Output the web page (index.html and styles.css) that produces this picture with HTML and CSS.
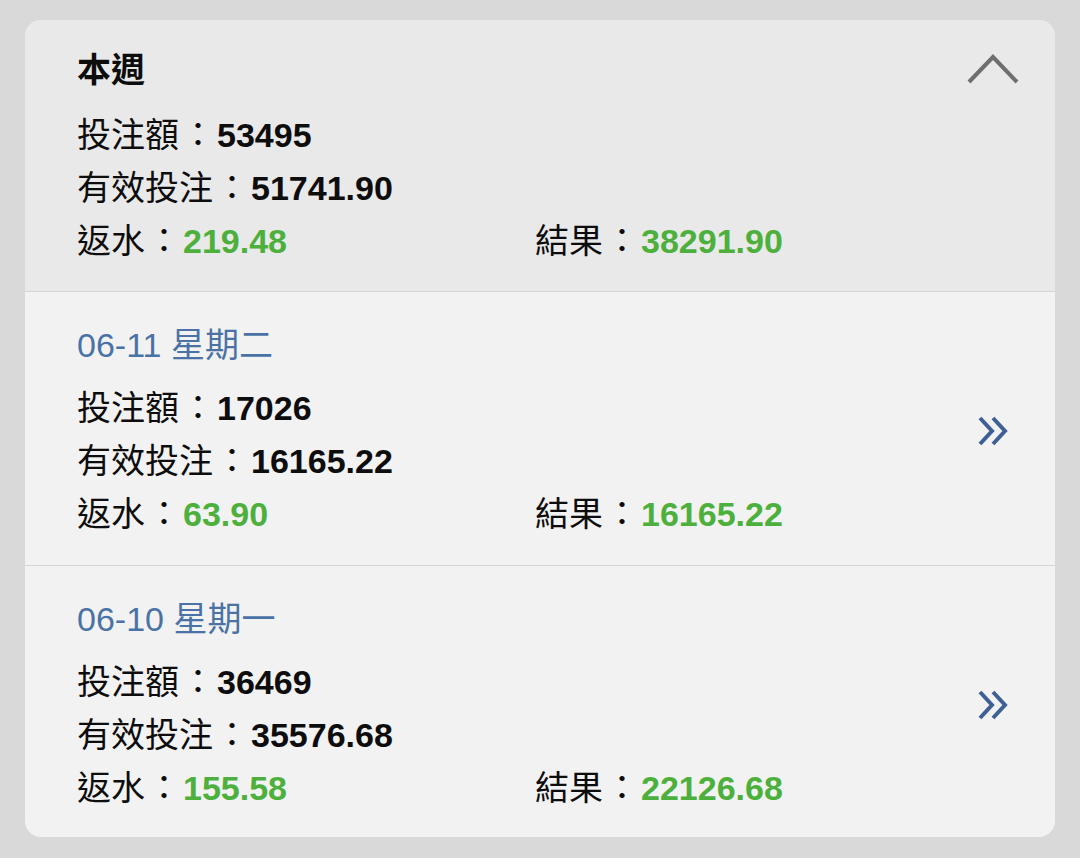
FILE: index.html
```html
<!DOCTYPE html>
<html>
<head>
    <title>投注記錄</title>
    <link rel="stylesheet" href="styles.css">
</head>
<body>
    <div class="card">
        <div class="section summary">
            <div class="info">
                <div class="title">本週</div>
                <div class="grid">
                    <div class="line wide">投注額<span class="colon">：</span><b>53495</b></div>
                    <div class="line wide">有效投注<span class="colon">：</span><b>51741.90</b></div>
                    <div class="line">返水<span class="colon">：</span><b class="green">219.48</b></div>
                    <div class="line">結果<span class="colon">：</span><b class="green">38291.90</b></div>
                </div>
            </div>
            <svg class="up" width="52" height="31" viewBox="0 0 52 31">
                <polyline points="2,28 26,3 50,28" fill="none" stroke="#6f6f6f" stroke-width="4"/>
            </svg>
        </div>
        <div class="section day">
            <div class="info">
                <div class="title date">06-11 星期二</div>
                <div class="grid">
                    <div class="line wide">投注額<span class="colon">：</span><b>17026</b></div>
                    <div class="line wide">有效投注<span class="colon">：</span><b>16165.22</b></div>
                    <div class="line">返水<span class="colon">：</span><b class="green">63.90</b></div>
                    <div class="line">結果<span class="colon">：</span><b class="green">16165.22</b></div>
                </div>
            </div>
            <svg class="more" width="32" height="30" viewBox="0 0 32 30">
                <polyline points="3,2 15,15 3,28" fill="none" stroke="#3e6096" stroke-width="4"/>
                <polyline points="16,2 28,15 16,28" fill="none" stroke="#3e6096" stroke-width="4"/>
            </svg>
        </div>
        <div class="section day last">
            <div class="info">
                <div class="title date">06-10 星期一</div>
                <div class="grid">
                    <div class="line wide">投注額<span class="colon">：</span><b>36469</b></div>
                    <div class="line wide">有效投注<span class="colon">：</span><b>35576.68</b></div>
                    <div class="line">返水<span class="colon">：</span><b class="green">155.58</b></div>
                    <div class="line">結果<span class="colon">：</span><b class="green">22126.68</b></div>
                </div>
            </div>
            <svg class="more" width="32" height="30" viewBox="0 0 32 30">
                <polyline points="3,2 15,15 3,28" fill="none" stroke="#3e6096" stroke-width="4"/>
                <polyline points="16,2 28,15 16,28" fill="none" stroke="#3e6096" stroke-width="4"/>
            </svg>
        </div>
    </div>
</body>
</html>
```

FILE: styles.css
```css
body {
    margin: 0;
    background-color: #d9d9d9;
    font-family: "Liberation Sans", "Noto Sans CJK TC", sans-serif;
    color: #0d0d0d;
}
.card {
    margin: 20px 25px;
    border-radius: 16px;
    overflow: hidden;
    background-color: #f2f2f2;
}
.section {
    display: flex;
    padding: 24px 46px 23px 52px;
    border-bottom: 1px solid #d4d4d4;
}
.section.day {
    padding-top: 27px;
    padding-bottom: 24px;
}
.section.last {
    border-bottom: none;
    padding-bottom: 22px;
}
.summary {
    background-color: #e9e9e9;
    padding-right: 36px;
}
.info {
    flex: 1;
}
.title {
    font-size: 34px;
    font-weight: bold;
    line-height: 53px;
    margin-bottom: 12px;
}
.title.date {
    font-weight: normal;
    color: #4a72a6;
    margin-bottom: 10px;
}
.grid {
    display: grid;
    grid-template-columns: 458px 1fr;
}
.line {
    font-size: 34px;
    line-height: 53px;
    white-space: nowrap;
}
.line.wide {
    grid-column: 1 / 3;
}
.colon {
    margin-left: 2px;
    margin-right: 2px;
}
.green {
    color: #4db03d;
}
.up {
    margin-top: 10px;
}
.more {
    align-self: center;
    margin-top: 2px;
}
```
